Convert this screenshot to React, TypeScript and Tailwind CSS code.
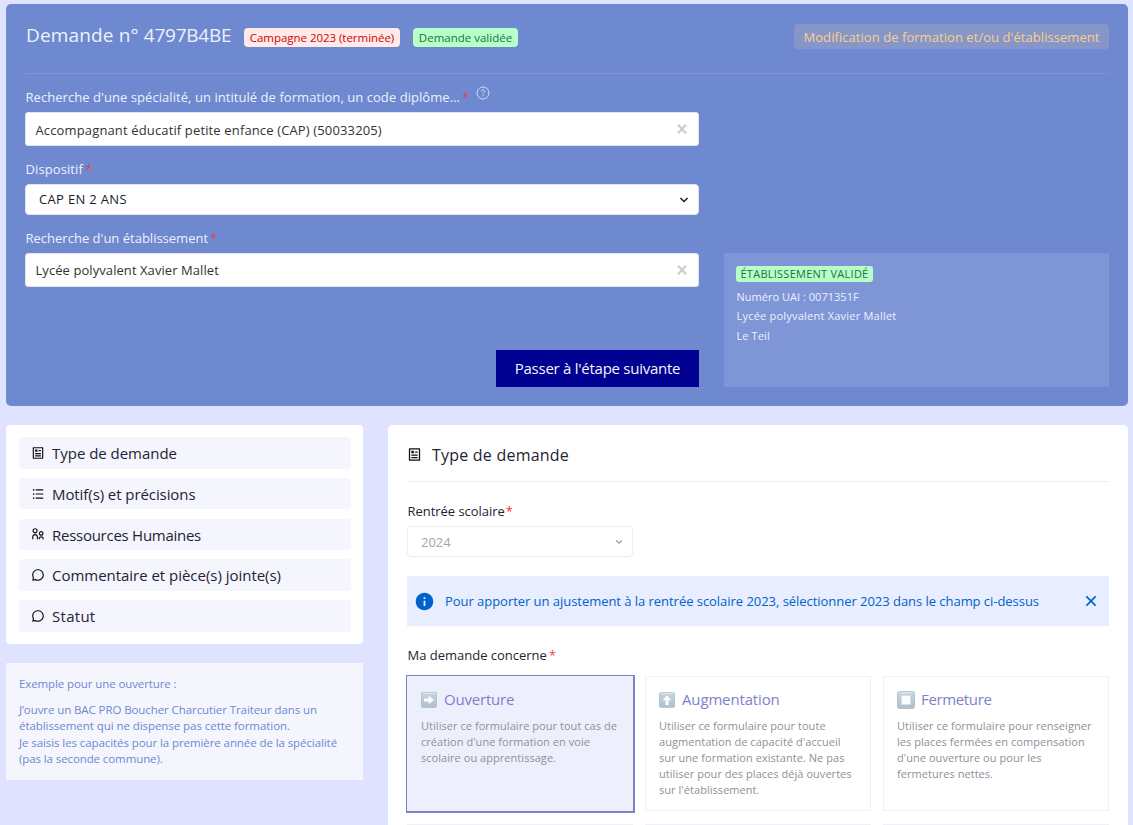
import React from 'react';
import { RiArticleLine, RiListUnordered, RiParentLine, RiChat3Line, RiInformationFill, RiCloseLine } from 'react-icons/ri';

function Required({ className = '' }: { className?: string }) {
  return <span className={`text-[12px] tracking-normal text-[#e53e4e] ${className}`}>*</span>;
}

function Chevron({ className }: { className: string }) {
  return (
    <svg viewBox="0 0 10 10" className={className} fill="none" stroke="currentColor" strokeWidth="1.4">
      <path d="M1.4 3.1 5 6.6l3.6-3.5" />
    </svg>
  );
}

function HelpIcon({ className }: { className: string }) {
  return (
    <svg viewBox="0 0 14 14" className={className} fill="none" stroke="currentColor" strokeWidth="1">
      <circle cx="7" cy="7" r="6" />
      <path d="M5.3 5.6C5.3 4.5 6 3.9 7 3.9s1.7.6 1.7 1.5c0 1.2-1.7 1.3-1.7 2.7M7 9v1.2" />
    </svg>
  );
}

function ClearIcon() {
  return (
    <svg viewBox="0 0 10 10" className="size-[10px]" stroke="#cccccc" strokeWidth="2.2">
      <path d="M1 0.8 9 9.2M9 0.8 1 9.2" />
    </svg>
  );
}

function SearchField({ value, valueClass }: { value: string; valueClass: string }) {
  return (
    <div className="flex h-[34px] items-center justify-between rounded-[3px] border border-[#dfe5ef] bg-white pl-[9.5px] pr-[11px] text-[13px] text-[#333333]">
      <span className={`whitespace-nowrap ${valueClass}`}>{value}</span>
      <ClearIcon />
    </div>
  );
}

const steps = [
  { label: 'Type de demande', icon: RiArticleLine, spacing: 'tracking-[-0.026px]' },
  { label: 'Motif(s) et précisions', icon: RiListUnordered, spacing: 'tracking-[-0.08px]' },
  { label: 'Ressources Humaines', icon: RiParentLine, spacing: 'tracking-[-0.264px]' },
  { label: 'Commentaire et pièce(s) jointe(s)', icon: RiChat3Line, spacing: 'tracking-[-0.027px]' },
  { label: 'Statut', icon: RiChat3Line, spacing: 'tracking-[0.283px]' },
];

function KeycapIcon({ kind }: { kind: string }) {
  const id = `keycap-${kind}`;
  return (
    <svg viewBox="0 0 17 17" className={kind === 'stop' ? 'size-[18px]' : 'size-4'}>
      <defs>
        <linearGradient id={id} x1="0" y1="0" x2="0" y2="1">
          <stop offset="0" stopColor="#c8d6e0" />
          <stop offset="1" stopColor="#afbfcc" />
        </linearGradient>
      </defs>
      <rect x="0.4" y="0.4" width="16.2" height="16.2" rx="2" fill={`url(#${id})`} stroke="#abbac6" strokeWidth="0.8" />
      <path d="M2.2 1.7h12.6" stroke="#dde7ee" strokeWidth="1.1" strokeLinecap="round" />
      {kind === 'right' && <path d="M3.2 6.8h5V3.9l5.6 4.6-5.6 4.6v-2.9h-5z" fill="#fafcff" />}
      {kind === 'up' && <path d="M6.8 13.8v-5H3.9l4.6-5.6 4.6 5.6h-2.9v5z" fill="#fafcff" />}
      {kind === 'stop' && <rect x="4.2" y="4.2" width="8.6" height="8.6" rx="0.6" fill="#fdfdff" stroke="#d4dde6" strokeWidth="0.7" />}
    </svg>
  );
}

const cards = [
  {
    kind: 'right',
    title: 'Ouverture',
    titleClass: 'tracking-[-0.2px]',
    lines: ['Utiliser ce formulaire pour tout cas de', "création d'une formation en voie", 'scolaire ou apprentissage.'],
  },
  {
    kind: 'up',
    title: 'Augmentation',
    titleClass: 'tracking-[-0.15px]',
    lines: ['Utiliser ce formulaire pour toute', "augmentation de capacité d'accueil", 'sur une formation existante. Ne pas', 'utiliser pour des places déjà ouvertes', "sur l'établissement."],
  },
  {
    kind: 'stop',
    title: 'Fermeture',
    titleClass: 'tracking-[-0.36px]',
    lines: ['Utiliser ce formulaire pour renseigner', 'les places fermées en compensation', "d'une ouverture ou pour les", 'fermetures nettes.'],
  },
];

export default function App() {
  return (
    <div className="h-[825px] overflow-hidden bg-[#dfe3ff] pl-[6px] pr-[5px] pt-1 font-['Open_Sans',sans-serif] text-[#1f2333]">
      <section className="h-[402px] rounded-[5px] bg-[#6e89d0] px-[19px] text-[#edf1fc]">
        <header className="flex h-[70px] items-start border-b border-[#7c95d9]">
          <h1 className="mt-[18px] w-[219px] whitespace-nowrap pl-px text-[19px] leading-[26px] tracking-[0.15px]">
            Demande n° <span className="tracking-[-0.25px]">4797B4BE</span>
          </h1>
          <span className="mt-6 flex h-[19px] w-[156px] items-center justify-center whitespace-nowrap rounded-[4px] bg-[#ffe9e9] pt-px text-[11.5px] tracking-[-0.035px] text-[#ce0500]">Campagne 2023 (terminée)</span>
          <span className="ml-[13px] mt-6 flex h-[19px] w-[105px] items-center justify-center whitespace-nowrap rounded-[4px] bg-[#b8fec9] pt-px text-[11.5px] text-[#18753c]">Demande validée</span>
          <span className="ml-auto mt-5 flex h-[25px] w-[315px] items-center justify-center whitespace-nowrap rounded-[4px] bg-[#8796c8] pt-[3px] text-[13px] tracking-[0.055px] text-[#f8d08d]">Modification de formation et/ou d'établissement</span>
        </header>
        <div className="flex justify-between">
          <div className="w-[674px]">
            <div className="flex h-[38px] pl-[0.5px] pt-[14px] text-[13px] leading-[19px]">
              <span className="whitespace-nowrap tracking-[0.055px]">Recherche d'une spécialité, un intitulé de formation, un code diplôme...</span>
              <Required className="ml-[2.5px]" />
              <HelpIcon className="ml-[7px] mt-[-2px] size-[14px] text-[#d5def6]" />
            </div>
            <SearchField value="Accompagnant éducatif petite enfance (CAP) (50033205)" valueClass="pt-[3px] tracking-[0.14px]" />
            <div className="h-[38px] pl-[0.5px] pt-[14px] text-[13px] leading-[19px] tracking-[0.1px]">
              Dispositif <Required className="-ml-px" />
            </div>
            <div className="flex h-[31px] items-center justify-between rounded-[4px] border border-[#dfe5ef] bg-white pl-[13px] pr-[9px] text-[13px] tracking-[0.33px] text-[#161b2c]">
              CAP EN 2 ANS
              <Chevron className="size-[10px]" />
            </div>
            <div className="h-[38px] pl-[0.5px] pt-[14px] text-[13px] leading-[19px] tracking-[0.005px]">
              Recherche d'un établissement <Required className="-ml-px" />
            </div>
            <SearchField value="Lycée polyvalent Xavier Mallet" valueClass="pt-px tracking-[0.07px]" />
            <div className="mt-[63px] flex justify-end">
              <button className="h-[37px] w-[203px] whitespace-nowrap bg-[#000091] text-[15px] tracking-[-0.26px] text-[#f5f5fe]">Passer à l'étape suivante</button>
            </div>
          </div>
          <aside className="mt-[179px] h-[134px] w-[385px] bg-[#7e96d6] px-3 pt-[13px] text-[11px] font-medium">
            <span className="mb-[4.6px] flex h-4 w-[137px] items-center justify-center whitespace-nowrap rounded-[3px] bg-[#b8fec9] font-normal tracking-[0.258px] text-[#18753c]">ÉTABLISSEMENT VALIDÉ</span>
            <p className="h-[19.5px] pl-[0.5px] leading-[19.5px] tracking-[0.02px]">Numéro UAI : 0071351F</p>
            <p className="h-[19.5px] pl-[0.5px] leading-[19.5px] tracking-[0.22px]">Lycée polyvalent Xavier Mallet</p>
            <p className="h-[19.5px] pl-[0.5px] leading-[19.5px] tracking-[0.1px]">Le Teil</p>
          </aside>
        </div>
      </section>

      <div className="mt-[19px] flex items-start gap-[25px]">
        <div className="w-[357px]">
          <nav className="flex h-[219px] flex-col gap-[9.3px] rounded-[4px] bg-white px-[13px] pt-[12px] pb-3">
            {steps.map(({ label, icon: Icon, spacing }) => (
              <a key={label} className="flex h-[31.5px] w-[332px] items-center rounded-[4px] bg-[#f5f5fe] pl-3">
                <Icon className="mr-[7px] size-[14px] text-[#0c0c12]" />
                <span className={`whitespace-nowrap pt-px text-[15px] ${spacing}`}>{label}</span>
              </a>
            ))}
          </nav>
          <div className="mt-[19px] h-[117px] whitespace-nowrap bg-[#f5f5fe] px-[13px] pt-[13px] text-[11.5px] leading-[16.5px] text-[#6e89d0]">
            <p className="mb-[9.4px] tracking-[-0.1px]">Exemple pour une ouverture :</p>
            <p className="tracking-[-0.088px]">J’ouvre un BAC PRO Boucher Charcutier Traiteur dans un</p>
            <p className="tracking-[-0.057px]">établissement qui ne dispense pas cette formation.</p>
            <p className="tracking-[-0.085px]">Je saisis les capacités pour la première année de la spécialité</p>
            <p className="tracking-[-0.1px]">(pas la seconde commune).</p>
          </div>
        </div>

        <main className="h-[420px] w-[740px] rounded-[5px] bg-white px-[19px]">
          <h2 className="flex h-[57px] items-center border-b border-[#eeeeee] pt-[3px] text-[16px] tracking-[0.217px]">
            <RiArticleLine className="mr-[11px] size-[15px] text-[#0c0c12]" />
            <span className="-ml-px">Type de demande</span>
          </h2>
          <p className="h-11 pl-[0.5px] pt-5 text-[13px] leading-[19px] tracking-[-0.04px]">
            Rentrée scolaire <Required className="-ml-[2px] !text-[#ff1a26]" />
          </p>
          <div className="flex h-[31px] w-[226px] items-center justify-between rounded-[4px] border border-[#eeeeee] pl-[13px] pr-[9px] text-[13px] text-[#a5a6ad]">
            <span className="pt-[3px]">2024</span>
            <Chevron className="size-[8px] text-[#93959d]" />
          </div>
          <div className="mt-[19px] flex h-[50px] items-center bg-[#e8edff] pl-2 pr-[10px] text-[#0063cb]">
            <RiInformationFill className="mr-[10px] -ml-px size-[21px]" />
            <span className="whitespace-nowrap pt-[2px] text-[13px] tracking-[-0.041px]">Pour apporter un ajustement à la rentrée scolaire 2023, sélectionner 2023 dans le champ ci-dessus</span>
            <RiCloseLine className="-mr-[2px] ml-auto size-5" />
          </div>
          <p className="h-[50px] pl-[0.5px] pt-5 text-[13px] leading-[19px] tracking-[-0.01px]">
            Ma demande concerne <Required className="-ml-px" />
          </p>
          <div className="grid grid-cols-3 gap-x-3 gap-y-[13px]">
            {cards.map((card, index) => (
              <article
                key={card.title}
                className={
                  index === 0
                    ? '-mb-[2px] -ml-px -mr-[2px] -mt-px h-[138px] border-t border-r-2 border-b-2 border-l border-[#8080c8] bg-[#eeeffd] pl-[14px] pt-[15px]'
                    : 'h-[135px] border border-[#f0f1f7] pl-[13px] pt-[14px]'
                }
              >
                <h3 className="flex h-[18px] items-center text-[15px] text-[#8080c8]">
                  <KeycapIcon kind={card.kind} />
                  <span className={`pb-px leading-[21px] ${card.kind === 'stop' ? 'ml-[6px]' : 'ml-[7px]'} ${card.titleClass}`}>{card.title}</span>
                </h3>
                <div className="mt-[9px] whitespace-nowrap text-[11px] leading-4 tracking-[0.045px] text-[#8f9098]">
                  {card.lines.map((line) => (
                    <p key={line}>{line}</p>
                  ))}
                </div>
              </article>
            ))}
            {[0, 1, 2].map((n) => (
              <article key={n} className="h-[135px] border border-[#f0f1f7]" />
            ))}
          </div>
        </main>
      </div>
    </div>
  );
}
